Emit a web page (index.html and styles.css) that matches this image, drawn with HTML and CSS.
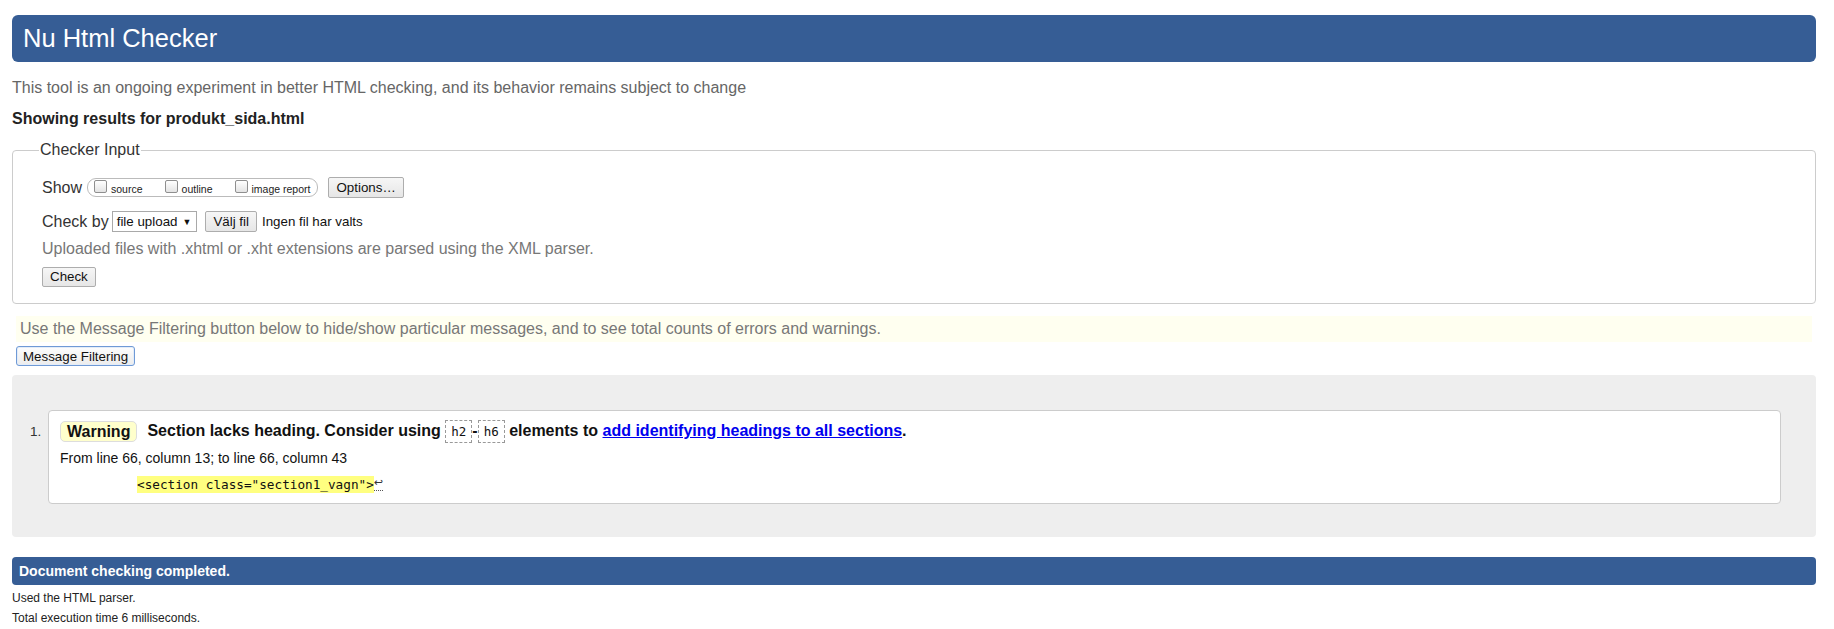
FILE: index.html
```html
<!DOCTYPE html>
<html lang="en">
<head>
<meta charset="utf-8">
<title>Nu Html Checker</title>
<link rel="stylesheet" href="styles.css">
</head>
<body>
<h1 class="masthead">Nu Html Checker</h1>
<p class="about">This tool is an ongoing experiment in better HTML checking, and its behavior remains subject to change</p>
<p class="results-for">Showing results for produkt_sida.html</p>
<fieldset class="checker-input">
  <legend>Checker Input</legend>
  <div class="row show-row">
    <span class="row-label">Show</span>
    <span class="show-options">
      <label class="opt"><input type="checkbox"><span>source</span></label>
      <label class="opt"><input type="checkbox"><span>outline</span></label>
      <label class="opt"><input type="checkbox"><span>image report</span></label>
    </span>
    <button class="btn btn-options" type="button">Options…</button>
  </div>
  <div class="row check-row">
    <span class="row-label">Check by</span>
    <span class="select">file upload<span class="caret">▼</span></span>
    <button class="btn btn-file" type="button">Välj fil</button>
    <span class="file-status">Ingen fil har valts</span>
  </div>
  <p class="hint">Uploaded files with .xhtml or .xht extensions are parsed using the XML parser.</p>
  <button class="btn btn-check" type="button">Check</button>
</fieldset>
<p class="filter-note">Use the Message Filtering button below to hide/show particular messages, and to see total counts of errors and warnings.</p>
<button class="btn btn-focus" type="button">Message Filtering</button>
<div class="results">
  <ol class="messages">
    <li class="message">
      <span class="num">1.</span>
      <div class="msg-box">
        <p class="msg-line"><strong class="badge">Warning</strong><span class="msg-text">Section lacks heading. Consider using <code class="tag">h2</code>-<code class="tag">h6</code> elements to <a class="doc-link" href="#">add identifying headings to all sections</a>.</span></p>
        <p class="location">From line 66, column 13; to line 66, column 43</p>
        <p class="extract"><code><mark class="hl">&lt;section class="section1_vagn"&gt;</mark><span class="lf">↩</span></code></p>
      </div>
    </li>
  </ol>
</div>
<h2 class="done">Document checking completed.</h2>
<p class="stats">Used the HTML parser.</p>
<p class="stats">Total execution time 6 milliseconds.</p>
</body>
</html>
```
FILE: styles.css
```css
html, body {
  background: #fff;
}
body {
  margin: 0;
  padding: 15px 18px 0 12px;
  font-family: "Liberation Sans", Arial, sans-serif;
  color: #222;
  font-size: 16px;
}
p { margin: 0; }

.masthead {
  margin: 0;
  height: 47px;
  line-height: 47px;
  padding: 0 11px;
  background: #365d95;
  color: #fff;
  font-size: 25.5px;
  font-weight: normal;
  border-radius: 6px;
}
.about {
  margin-top: 17px;
  line-height: 18px;
  color: #666;
  font-size: 16px;
}
.results-for {
  margin-top: 13px;
  line-height: 18px;
  font-weight: bold;
  color: #222;
}

/* Checker input fieldset */
.checker-input {
  margin: 13px 0 0 0;
  padding: 18px 20px 16px 29px;
  border: 1px solid #ccc;
  border-radius: 4px;
  min-width: 0;
}
.checker-input legend {
  font-size: 16px;
  line-height: 18px;
  color: #333;
  padding: 0 1px;
  margin-left: -3px;
}
.row {
  display: flex;
  align-items: center;
  height: 21px;
  color: #333;
}
.row-label {
  font-size: 16px;
}
.show-options {
  display: flex;
  align-items: center;
  height: 17px;
  margin-left: 5px;
  padding: 0 7px 0 6px;
  border: 1px solid #bbb;
  border-radius: 9px;
  gap: 22px;
}
.opt {
  display: flex;
  align-items: center;
  gap: 4px;
  font-size: 10.5px;
  color: #222;
}
.opt input {
  -webkit-appearance: none;
  appearance: none;
  margin: 0;
  width: 13px;
  height: 13px;
  border: 1px solid #8f8f8f;
  border-radius: 2px;
  background: linear-gradient(#fff, #e4e4e4);
  position: relative;
  top: -1px;
}
.opt span {
  padding-top: 2px;
}
.btn {
  font-family: "Liberation Sans", Arial, sans-serif;
  font-size: 13.33px;
  color: #111;
  height: 21px;
  padding: 0 7px;
  margin: 0;
  border: 1px solid #adadad;
  border-radius: 2px;
  background: linear-gradient(#f6f6f6, #e6e6e6);
  line-height: 19px;
}
.btn-options {
  margin-left: 10px;
}
.check-row {
  margin-top: 13px;
}
.select {
  display: inline-flex;
  align-items: center;
  height: 19px;
  margin-left: 3px;
  padding: 0 5px 0 4px;
  border: 1px solid #a9a9a9;
  background: #fff;
  font-size: 13.33px;
  color: #111;
}
.caret {
  font-size: 9px;
  margin-left: 5px;
}
.btn-file {
  margin-left: 8px;
}
.file-status {
  margin-left: 5px;
  font-size: 13.33px;
  color: #111;
}
.hint {
  margin-top: 8px;
  line-height: 18px;
  color: #777;
}
.btn-check {
  margin-top: 9px;
  height: 20px;
  line-height: 18px;
}

/* filter note */
.filter-note {
  margin: 12px 4px 0 4px;
  height: 26px;
  line-height: 26px;
  padding-left: 4px;
  background: #fffff0;
  color: #777;
}
.btn-focus {
  display: block;
  margin: 4px 0 0 4px;
  height: 20px;
  line-height: 17px;
  padding: 0 6px;
  border: 1px solid #6f9ad6;
  border-radius: 3px;
  box-shadow: inset 0 0 0 1px #e3ecf8;
  background: linear-gradient(#fdfdfd, #ececec);
}

/* results */
.results {
  margin-top: 9px;
  background: #eee;
  border-radius: 4px;
  padding: 35px 35px 33px 18px;
}
.messages {
  list-style: none;
  margin: 0;
  padding: 0;
}
.message {
  display: flex;
  align-items: flex-start;
}
.num {
  width: 18px;
  flex: none;
  margin-top: 14px;
  font-size: 13.5px;
  line-height: 16px;
  color: #333;
}
.msg-box {
  flex: 1;
  background: #fff;
  border: 1px solid #ccc;
  border-radius: 4px;
  padding: 8px 11px 10px 11px;
}
.msg-line {
  display: flex;
  align-items: center;
  height: 25px;
  font-weight: bold;
  color: #111;
}
.badge {
  display: inline-block;
  height: 19px;
  line-height: 19px;
  padding: 0 6px;
  background: #ffffcc;
  border: 1px solid #ddd;
  border-radius: 5px;
  font-size: 16px;
  color: #111;
}
.msg-text {
  margin-left: 10px;
  font-size: 16px;
  white-space: pre;
}
.tag {
  display: inline-block;
  font-family: "DejaVu Sans Mono", "Liberation Mono", monospace;
  font-size: 12.5px;
  font-weight: normal;
  line-height: 21px;
  padding: 0 5px;
  border: 1px dashed #999;
  color: #111;
  vertical-align: middle;
}
.doc-link {
  color: #0000ee;
  text-decoration: underline;
}
.location {
  margin-top: 5px;
  font-size: 14px;
  line-height: 18px;
  color: #111;
}
.extract {
  margin-top: 8px;
  padding-left: 77px;
  line-height: 17px;
}
.extract code {
  font-family: "DejaVu Sans Mono", "Liberation Mono", monospace;
  font-size: 12.7px;
  color: #111;
}
.hl {
  background: #ffff80;
  color: #111;
  display: inline-block;
  height: 17px;
  line-height: 17px;
}
.lf {
  display: inline-block;
  font-family: "DejaVu Sans", sans-serif;
  font-size: 11px;
  line-height: 15px;
  border-bottom: 1px dotted #555;
  color: #333;
  vertical-align: top;
}

/* completion */
.done {
  margin: 20px 0 0 0;
  height: 28px;
  line-height: 28px;
  padding-left: 7px;
  background: #365d95;
  color: #fff;
  font-size: 14px;
  font-weight: bold;
  border-radius: 4px;
}
.stats {
  font-size: 12px;
  line-height: 20px;
  color: #222;
}
.done + .stats {
  margin-top: 3px;
}
```
